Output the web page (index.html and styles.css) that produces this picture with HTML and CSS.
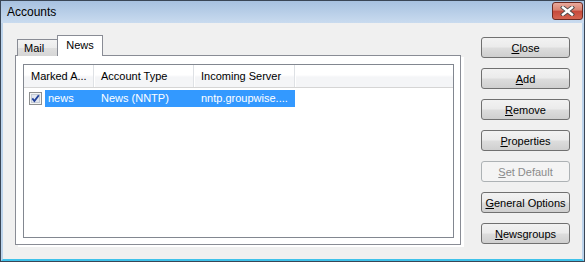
FILE: index.html
```html
<!DOCTYPE html>
<html lang="en">
<head>
    <meta charset="UTF-8">
    <title>Accounts</title>
    <link rel="stylesheet" href="styles.css">
</head>
<body>
    <div class="window">
        <!-- Title bar -->
        <div class="titlebar">
            <span class="title">Accounts</span>
            <span class="close-btn">
                <svg width="15" height="10" viewBox="0 0 15 10">
                    <path d="M3 1.5 L12 8.5 M12 1.5 L3 8.5" stroke="#4a4a4a" stroke-width="4.2" stroke-linecap="square"/>
                    <path d="M3 1.5 L12 8.5 M12 1.5 L3 8.5" stroke="#ffffff" stroke-width="2.4" stroke-linecap="square"/>
                </svg>
            </span>
        </div>

        <div class="body">
            <!-- Tabs -->
            <div class="tabs-area">
                <div class="tabs">
                    <div class="tab">Mail</div>
                    <div class="tab active">News</div>
                </div>
                <div class="panel">
                    <div class="list">
                        <div class="list-head">
                            <div class="col c1">Marked A...</div>
                            <div class="col c2">Account Type</div>
                            <div class="col c3">Incoming Server</div>
                        </div>
                        <div class="row">
                            <span class="check">
                                <svg width="13" height="13" viewBox="0 0 13 13">
                                    <rect x="0.5" y="0.5" width="12" height="12" fill="#f4f4f4" stroke="#8e8f8f"/>
                                    <rect x="2.5" y="2.5" width="8" height="8" fill="#e2e6ee" stroke="#c4cad4"/>
                                    <path d="M3.3 6.4 L5.4 9 L9.8 3.2" fill="none" stroke="#21409a" stroke-width="1.8"/>
                                </svg>
                            </span>
                            <div class="row-sel">
                                <span class="cell w1">news</span>
                                <span class="cell w2">News (NNTP)</span>
                                <span class="cell w3">nntp.groupwise....</span>
                            </div>
                        </div>
                    </div>
                </div>
            </div>

            <!-- Buttons -->
            <div class="buttons">
                <button class="btn"><u>C</u>lose</button>
                <button class="btn"><u>A</u>dd</button>
                <button class="btn"><u>R</u>emove</button>
                <button class="btn"><u>P</u>roperties</button>
                <button class="btn disabled"><u>S</u>et Default</button>
                <button class="btn"><u>G</u>eneral Options</button>
                <button class="btn"><u>N</u>ewsgroups</button>
            </div>
        </div>
    </div>
</body>
</html>
```

FILE: styles.css
```css
* { margin: 0; padding: 0; box-sizing: border-box; }
body { font-family: 'Liberation Sans', Arial, sans-serif; font-size: 11px; color: #000; background: #fff; }

.window { width: 585px; height: 262px; border: 1px solid #3a4656; display: flex; flex-direction: column; }

.titlebar { height: 22px; display: flex; align-items: flex-start; justify-content: space-between; background: linear-gradient(#a7c1e0, #c9dbef); }
.title { font-size: 12px; padding: 4px 0 0 6px; color: #000; }
.close-btn { width: 31px; height: 18px; margin: 1px 1px 0 0; border: 1px solid #6b2a22; border-radius: 3px; display: flex; align-items: center; justify-content: center;
    background: linear-gradient(#e9a99c 0%, #d98371 45%, #c5483a 50%, #d56450 100%); }

.body { flex: 1; display: flex; background: #f0f0f0; padding: 13px 12px 0 12px; border: 2px solid #bcd3eb; border-top: 0; border-bottom: 2px solid #3fc2ea; }

.tabs-area { width: 448px; }
.tabs { display: flex; align-items: flex-end; height: 20px; padding-left: 2px; margin-bottom: -1px; }
.tab { height: 17px; padding: 0 0 0 6px; border: 1px solid #898c95; border-bottom: 0; border-right: 0; line-height: 17px;
    background: linear-gradient(#f3f3f3 0%, #ebebeb 50%, #dedede 50%, #d6d6d6 100%); }
.tab:first-child { width: 40px; }
.tab.active { width: 46px; height: 21px; padding: 0; text-align: center; border-right: 1px solid #898c95; background: #fff; position: relative; z-index: 1; line-height: 18px; }

.panel { width: 446px; height: 190px; background: #fff; border: 1px solid #898c95; padding: 8px 0 0 7px; box-shadow: 3px 2px 0 #fff; }

.list { width: 431px; height: 174px; border: 1px solid #828790; background: #fff; }
.list-head { display: flex; height: 23px; border-bottom: 1px solid #d5d5d5; background: linear-gradient(#ffffff 0%, #ffffff 45%, #f4f5f7 55%, #f4f5f7 100%); }
.col { height: 22px; line-height: 22px; padding-left: 7px; border-right: 1px solid #dee1e5; box-shadow: 1px 0 0 #fff; white-space: nowrap; overflow: hidden; }
.c1 { width: 70px; }
.c2 { width: 100px; }
.c3 { width: 101px; }

.row { display: flex; align-items: center; height: 17px; margin-top: 2px; padding-left: 5px; }
.check { width: 13px; height: 13px; margin-right: 3px; display: flex; }
.row-sel { display: flex; height: 17px; width: 250px; background: #3399ff; color: #fff; line-height: 17px; }
.cell { white-space: nowrap; overflow: hidden; }
.w1 { width: 49px; padding-left: 3px; }
.w2 { width: 100px; padding-left: 7px; }
.w3 { width: 101px; padding-left: 7px; }

.buttons { margin-left: auto; padding-top: 1px; display: flex; flex-direction: column; }
.btn { width: 89px; height: 21px; margin-bottom: 10px; border: 1px solid #707070; border-radius: 3px; font-family: 'Liberation Sans', Arial, sans-serif; font-size: 11px; color: #000;
    background: linear-gradient(#f2f2f2 0%, #ebebeb 48%, #dddddd 52%, #cfcfcf 100%); }
.btn.disabled { border-color: #adb2b5; background: #f4f4f4; color: #8b8b8b; }
```
